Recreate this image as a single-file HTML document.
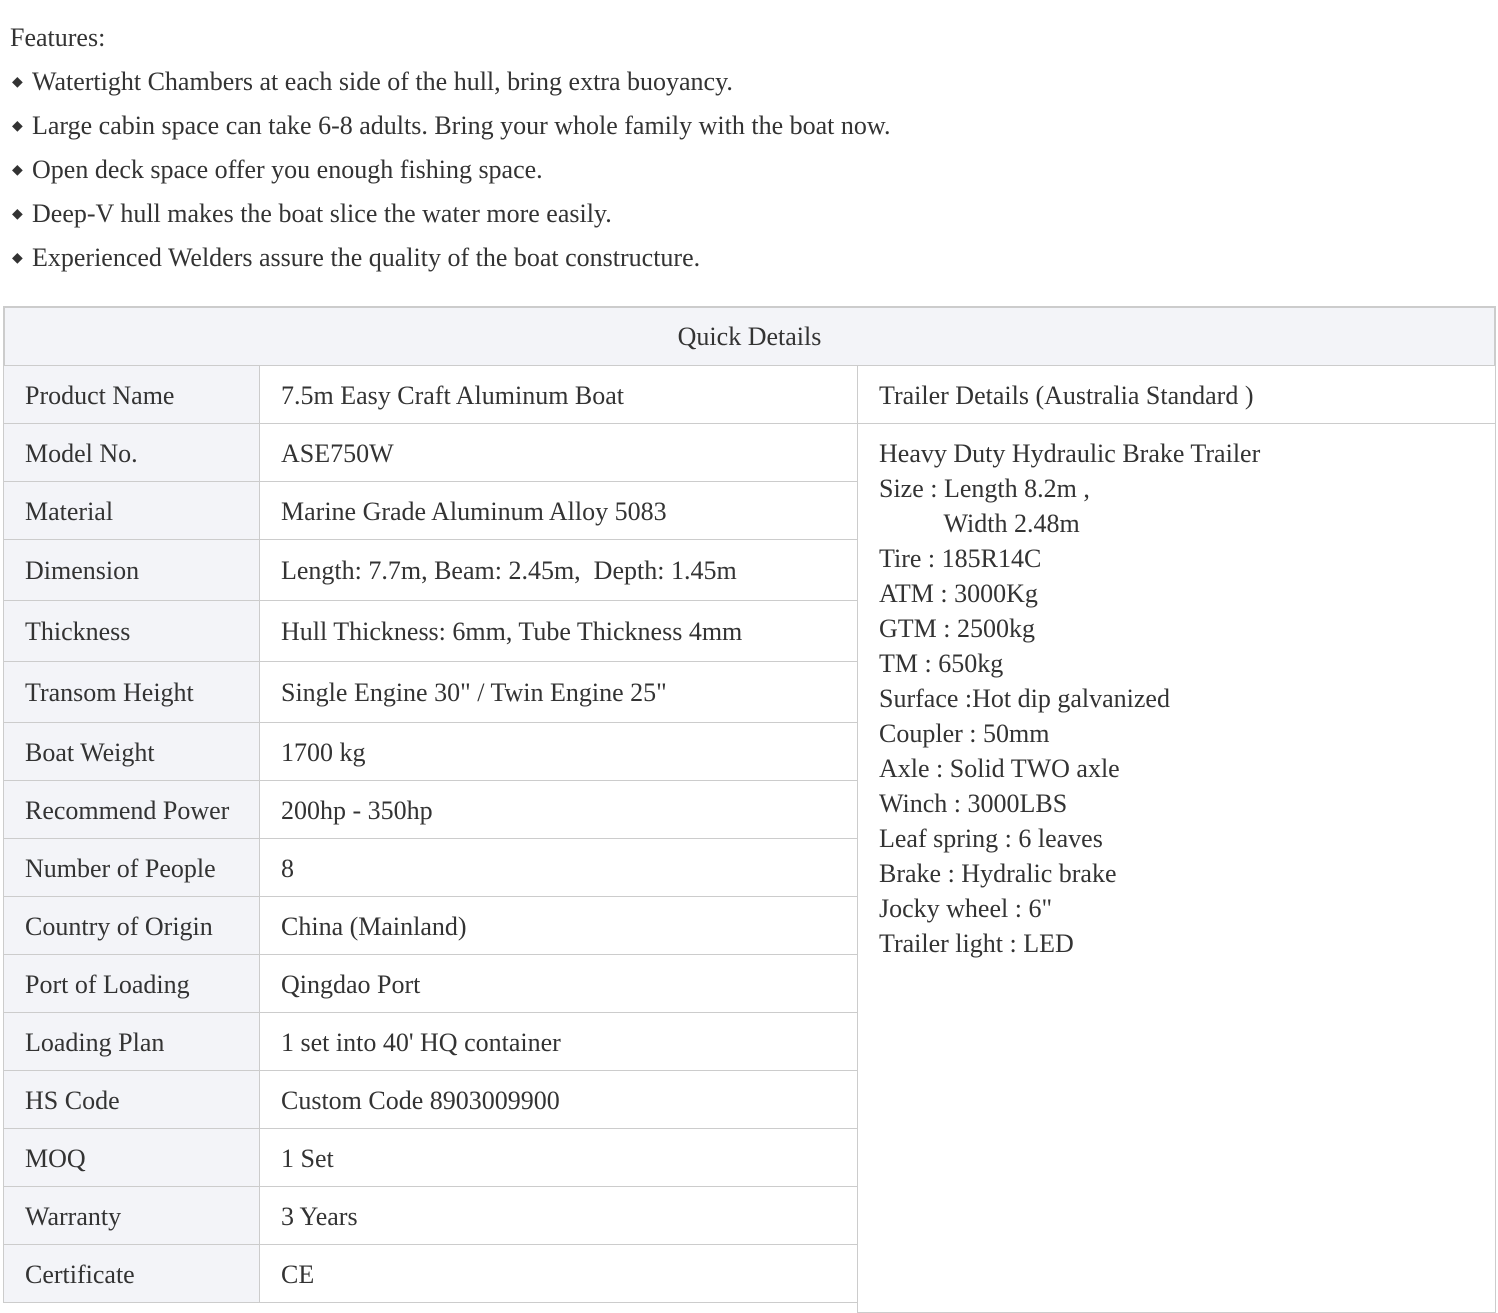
<!DOCTYPE html>
<html><head><meta charset="utf-8"><style>
*{margin:0;padding:0;box-sizing:border-box}
body{width:1498px;height:1301px;background:#fff;font-family:"Liberation Serif",serif;color:#333;font-size:26px;position:relative;overflow:hidden}
.f{position:absolute;left:10px;line-height:44px;white-space:nowrap}
.f b{font-weight:normal;font-size:14px;display:inline-block;width:22px;vertical-align:4px;padding-left:2px}
.c{position:absolute;border:1px solid #ccc;display:flex;align-items:center;padding-left:21px;padding-top:2px;white-space:nowrap}
.l{background:#f3f4f8}
.r{position:absolute;left:879px;top:436px;line-height:35px;white-space:pre}
</style></head><body>
<div class="f" style="top:16px">Features:</div>
<div class="f" style="top:60px"><b>◆</b>Watertight Chambers at each side of the hull, bring extra buoyancy.</div>
<div class="f" style="top:104px"><b>◆</b>Large cabin space can take 6-8 adults. Bring your whole family with the boat now.</div>
<div class="f" style="top:148px"><b>◆</b>Open deck space offer you enough fishing space.</div>
<div class="f" style="top:192px"><b>◆</b>Deep-V hull makes the boat slice the water more easily.</div>
<div class="f" style="top:236px"><b>◆</b>Experienced Welders assure the quality of the boat constructure.</div>

<div class="c l" style="left:3px;top:306px;width:1493px;height:60px;justify-content:center;padding:0;border-width:2px 2px 1px 2px">Quick Details</div>
<div class="c" style="left:857px;top:365px;width:639px;height:59px">Trailer Details (Australia Standard )</div>
<div class="c" style="left:857px;top:423px;width:639px;height:890px"></div>
<div class="r">Heavy Duty Hydraulic Brake Trailer
Size : Length 8.2m ,
          Width 2.48m
Tire : 185R14C
ATM : 3000Kg
GTM : 2500kg
TM : 650kg
Surface :Hot dip galvanized
Coupler : 50mm
Axle : Solid TWO axle
Winch : 3000LBS
Leaf spring : 6 leaves
Brake : Hydralic brake
Jocky wheel : 6"
Trailer light : LED</div>

<div class="c l" style="left:3px;top:365px;width:257px;height:59px">Product Name</div><div class="c" style="left:259px;top:365px;width:599px;height:59px">7.5m Easy Craft Aluminum Boat</div>
<div class="c l" style="left:3px;top:423px;width:257px;height:59px">Model No.</div><div class="c" style="left:259px;top:423px;width:599px;height:59px">ASE750W</div>
<div class="c l" style="left:3px;top:481px;width:257px;height:59px">Material</div><div class="c" style="left:259px;top:481px;width:599px;height:59px">Marine Grade Aluminum Alloy 5083</div>
<div class="c l" style="left:3px;top:539px;width:257px;height:62px">Dimension</div><div class="c" style="left:259px;top:539px;width:599px;height:62px">Length: 7.7m, Beam: 2.45m,&nbsp; Depth: 1.45m</div>
<div class="c l" style="left:3px;top:600px;width:257px;height:62px">Thickness</div><div class="c" style="left:259px;top:600px;width:599px;height:62px">Hull Thickness: 6mm, Tube Thickness 4mm</div>
<div class="c l" style="left:3px;top:661px;width:257px;height:62px">Transom Height</div><div class="c" style="left:259px;top:661px;width:599px;height:62px">Single Engine 30" / Twin Engine 25"</div>
<div class="c l" style="left:3px;top:722px;width:257px;height:59px">Boat Weight</div><div class="c" style="left:259px;top:722px;width:599px;height:59px">1700 kg</div>
<div class="c l" style="left:3px;top:780px;width:257px;height:59px">Recommend Power</div><div class="c" style="left:259px;top:780px;width:599px;height:59px">200hp - 350hp</div>
<div class="c l" style="left:3px;top:838px;width:257px;height:59px">Number of People</div><div class="c" style="left:259px;top:838px;width:599px;height:59px">8</div>
<div class="c l" style="left:3px;top:896px;width:257px;height:59px">Country of Origin</div><div class="c" style="left:259px;top:896px;width:599px;height:59px">China (Mainland)</div>
<div class="c l" style="left:3px;top:954px;width:257px;height:59px">Port of Loading</div><div class="c" style="left:259px;top:954px;width:599px;height:59px">Qingdao Port</div>
<div class="c l" style="left:3px;top:1012px;width:257px;height:59px">Loading Plan</div><div class="c" style="left:259px;top:1012px;width:599px;height:59px">1 set into 40' HQ container</div>
<div class="c l" style="left:3px;top:1070px;width:257px;height:59px">HS Code</div><div class="c" style="left:259px;top:1070px;width:599px;height:59px">Custom Code 8903009900</div>
<div class="c l" style="left:3px;top:1128px;width:257px;height:59px">MOQ</div><div class="c" style="left:259px;top:1128px;width:599px;height:59px">1 Set</div>
<div class="c l" style="left:3px;top:1186px;width:257px;height:59px">Warranty</div><div class="c" style="left:259px;top:1186px;width:599px;height:59px">3 Years</div>
<div class="c l" style="left:3px;top:1244px;width:257px;height:59px">Certificate</div><div class="c" style="left:259px;top:1244px;width:599px;height:59px">CE</div>
</body></html>
